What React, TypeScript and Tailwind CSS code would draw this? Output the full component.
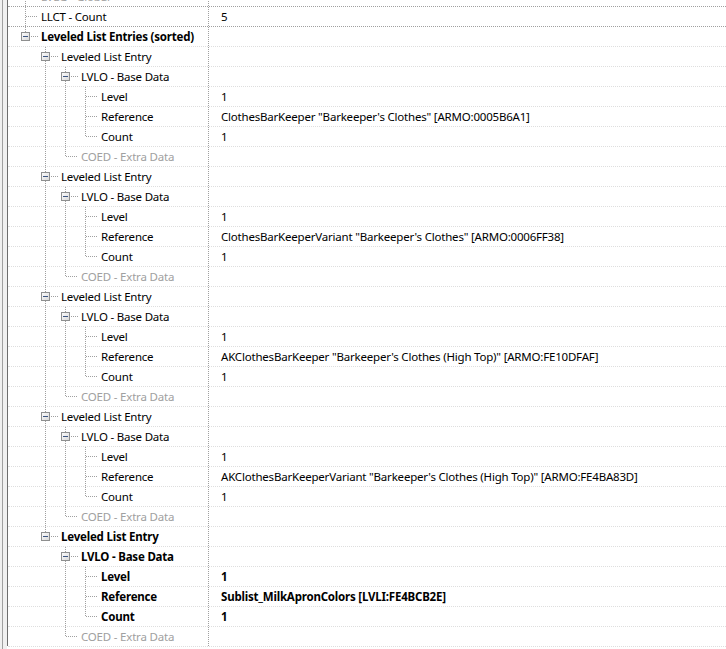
import React from "react";

type Row = {
  level: number;
  name: string;
  value?: string;
  bold?: boolean;
  gray?: boolean;
  box?: boolean;
};

const entries: { ref: string; bold?: boolean }[] = [
  { ref: 'ClothesBarKeeper "Barkeeper\'s Clothes" [ARMO:0005B6A1]' },
  { ref: 'ClothesBarKeeperVariant "Barkeeper\'s Clothes" [ARMO:0006FF38]' },
  { ref: 'AKClothesBarKeeper "Barkeeper\'s Clothes (High Top)" [ARMO:FE10DFAF]' },
  { ref: 'AKClothesBarKeeperVariant "Barkeeper\'s Clothes (High Top)" [ARMO:FE4BA83D]' },
  { ref: "Sublist_MilkApronColors [LVLI:FE4BCB2E]", bold: true },
];

const rows: Row[] = [
  { level: 1, name: "LVLG - Global", gray: true },
  { level: 1, name: "LLCT - Count", value: "5" },
  { level: 1, name: "Leveled List Entries (sorted)", bold: true, box: true },
];
entries.forEach((e) => {
  rows.push({ level: 2, name: "Leveled List Entry", box: true, bold: e.bold });
  rows.push({ level: 3, name: "LVLO - Base Data", box: true, bold: e.bold });
  rows.push({ level: 4, name: "Level", value: "1", bold: e.bold });
  rows.push({ level: 4, name: "Reference", value: e.ref, bold: e.bold });
  rows.push({ level: 4, name: "Count", value: "1", bold: e.bold });
  rows.push({ level: 3, name: "COED - Extra Data", gray: true });
});

function continues(i: number, k: number): boolean {
  for (let j = i + 1; j < rows.length; j++) {
    if (rows[j].level < k) return false;
    if (rows[j].level === k) return true;
  }
  return false;
}

const LINE = "#a0a0a0";
const H = 19;
const CY = 9;

function TreeGuides({ i }: { i: number }) {
  const r = rows[i];
  const L = r.level;
  const width = 33 + (L - 1) * 20;
  const xs = (k: number) => 17 + (k - 1) * 20 + 0.5;
  const parts: React.ReactNode[] = [];
  for (let k = 1; k < L; k++) {
    if (continues(i, k)) {
      parts.push(
        <line key={"a" + k} x1={xs(k)} y1={0} x2={xs(k)} y2={H} stroke={LINE} strokeDasharray="1 1" />
      );
    }
  }
  const x = xs(L);
  const next = continues(i, L);
  if (r.box) {
    parts.push(<line key="t" x1={x} y1={0} x2={x} y2={CY - 4} stroke={LINE} strokeDasharray="1 1" />);
    if (next)
      parts.push(<line key="b" x1={x} y1={CY + 5} x2={x} y2={H} stroke={LINE} strokeDasharray="1 1" />);
    parts.push(
      <line key="h" x1={x + 5} y1={CY + 0.5} x2={x + 12} y2={CY + 0.5} stroke={LINE} strokeDasharray="1 1" />
    );
    parts.push(
      <rect key="r" x={x - 4} y={CY - 3.5} width={8} height={8} fill="url(#boxg)" stroke="#8e8f8f" />
    );
    parts.push(
      <line key="m" x1={x - 2.5} y1={CY + 0.5} x2={x + 2.5} y2={CY + 0.5} stroke="#3c5581" />
    );
  } else {
    parts.push(
      <line key="v" x1={x} y1={0} x2={x} y2={next ? H : CY} stroke={LINE} strokeDasharray="1 1" />
    );
    parts.push(
      <line key="h" x1={x} y1={CY + 0.5} x2={x + 12} y2={CY + 0.5} stroke={LINE} strokeDasharray="1 1" />
    );
  }
  return (
    <svg width={width} height={H} className="shrink-0" shapeRendering="crispEdges">
      <defs>
        <linearGradient id="boxg" x1="0" y1="0" x2="1" y2="1">
          <stop offset="0" stopColor="#ffffff" />
          <stop offset="1" stopColor="#d6d6d6" />
        </linearGradient>
      </defs>
      {parts}
    </svg>
  );
}

export default function App() {
  return (
    <div
      className="w-[726px] h-[649px] overflow-hidden bg-white flex text-[11.5px] tracking-[-0.2px] text-black"
      style={{ fontFamily: '"Noto Sans", "Liberation Sans", sans-serif' }}
    >
      <div className="w-[7px] h-full bg-[#f0f0f0] flex shrink-0">
        <div className="w-[2px]" />
        <div className="w-[1px] bg-[#a0a0a0]" />
      </div>
      <div className="flex-1 flex flex-col">
        <div className="-mt-[14px] border-l border-[#6d6d6d] flex flex-col">
          {rows.map((r, i) => (
            <div
              key={i}
              className={
                "h-[20px] flex border-t border-dotted " +
                (r.level === 1 ? "border-[#a0a0a0]" : "border-[#dedede]")
              }
            >
              <div className="w-[200px] flex items-center shrink-0 overflow-hidden">
                <TreeGuides i={i} />
                <span
                  className={
                    "whitespace-nowrap leading-[19px] " +
                    (r.bold ? "font-bold " : "") +
                    (r.gray ? "text-[#a0a0a0]" : "")
                  }
                >
                  {r.name}
                </span>
              </div>
              <div className="flex-1 border-l border-dotted border-[#a0a0a0] pl-[12px] flex items-center">
                <span className={"whitespace-nowrap leading-[19px] " + (r.bold ? "font-bold" : "")}>
                  {r.value ?? ""}
                </span>
              </div>
            </div>
          ))}
        </div>
        <div className="flex-1 border-t border-dotted border-[#dedede] ml-[1px]" />
      </div>
    </div>
  );
}
